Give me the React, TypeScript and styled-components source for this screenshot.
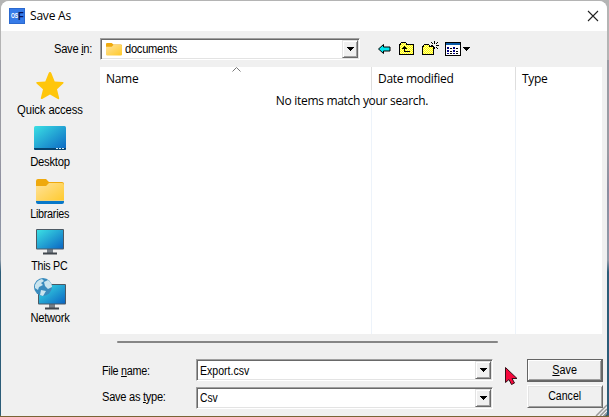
import React from 'react';
import styled, { createGlobalStyle } from 'styled-components';

const Global = createGlobalStyle`
  *{box-sizing:border-box}
  body{margin:0;background:#285b78;overflow:hidden}
  svg{display:block;flex:none}
`;

const Screen = styled.div`
  width:609px;height:417px;padding:1px 2px 1px 1px;overflow:hidden;
  background:linear-gradient(#b4b4b4 0 60px,#9a9ba3 60px 150px,#8b8da0 190px,#8f9aa8 260px,#2b5c78 272px 415px,#7a6335 416px);
`;
const Dialog = styled.div`
  height:415px;background:#f0f0f0;border-radius:8px 8px 0 0;overflow:hidden;position:relative;
  font-family:"Liberation Sans",Arial,sans-serif;font-size:12px;color:#000;
`;
const TitleBar = styled.header`
  height:30px;background:#fff;display:flex;align-items:center;padding:0 8px 0 8px;
`;
const Title = styled.h1`
  margin:0 auto 0 5px;font:12px/16px "Open Sans","Noto Sans",sans-serif;letter-spacing:-.2px;
`;
const Text = styled.span<{ $narrow: number; $ls?: number; $center?: boolean }>`
  display:inline-block;white-space:pre;line-height:14px;letter-spacing:${p => p.$ls ?? -0.3}px;
  transform:scaleX(${p => p.$narrow});transform-origin:${p => (p.$center ? 'center' : 'left')};
  u{text-underline-offset:1px;text-decoration-thickness:1px}
`;
const LookIn = styled.div`
  height:36px;display:flex;align-items:flex-start;padding:7px 0 0 53px;
`;
const LookLabel = styled.label`width:46px;padding-top:4px;display:flex`;
const Combo = styled.div<{ $w: number }>`
  width:${p => p.$w}px;height:22px;display:flex;align-items:center;background:#fff;padding:0 1px 0 1px;
  border:1px solid;border-color:#a0a0a0 #fff #fff #a0a0a0;
  box-shadow:inset 1px 1px #696969,inset -1px -1px #e3e3e3;
`;
const Value = styled.div<{ $inset?: number; $top?: number }>`
  flex:1;display:flex;align-items:center;gap:3px;padding:${p => p.$top ?? 0}px 0 0 ${p => p.$inset ?? 1.5}px;
`;
const Drop = styled.button`
  width:16px;height:18px;padding:0;border:1px solid;border-color:#e3e3e3 #696969 #696969 #e3e3e3;
  box-shadow:inset 1px 1px #fff,inset -1px -1px #a0a0a0;background:#f0f0f0;display:grid;place-items:center;
`;
const Tools = styled.div`
  display:flex;padding:3px 0 0 17px;gap:7px;
  svg:first-child{margin-right:-1px}
  svg:last-child{margin-left:-1px}
`;
const Middle = styled.div`display:flex;height:267px`;
const Places = styled.nav`width:99px;padding:3px 2px 0 0`;
const Place = styled.div`
  height:52px;display:flex;flex-direction:column;align-items:center;gap:1px;
`;
const List = styled.section`
  width:502px;background:#fff;display:grid;grid-template-columns:272px 144px 1fr;position:relative;
`;
const Column = styled.div`
  padding:4px 6px;border-right:1px solid;border-image:linear-gradient(#dedede 24px,#edf3fa 24px) 1;
  border-width:0 1px 0 0;font:12px/16px "Open Sans","Noto Sans",sans-serif;letter-spacing:-.3px;
  &:last-of-type{border:0}
`;
const Sort = styled.svg`position:absolute;left:132px;top:0`;
const Empty = styled.p`
  position:absolute;top:26px;left:0;width:504px;margin:0;text-align:center;
  font:12px/16px "Open Sans","Noto Sans",sans-serif;letter-spacing:-.3px;
`;
const Scroll = styled.div`width:381px;height:2px;margin:7px 0 0 116px;background:#868686;border-radius:1px`;
const Form = styled.div`display:flex;padding:16px 0 0 101px`;
const Fields = styled.div`
  display:grid;grid-template-columns:94px 297px;row-gap:6px;align-content:start;margin-right:34px;
`;
const Actions = styled.div`display:flex;flex-direction:column;gap:3px`;
const FieldLabel = styled.label<{ $top: number }>`padding-top:${p => p.$top}px;display:flex`;
const Button = styled.button<{ $primary?: boolean }>`
  width:76px;height:23px;padding:0 1px 1px 0;background:#f0f0f0;color:#000;
  font:12px/14px "Liberation Sans",Arial,sans-serif;border:1px solid;
  border-color:${p => (p.$primary ? '#646464' : '#fff #696969 #696969 #fff')};
  box-shadow:${p => (p.$primary ? 'inset -1px -1px #696969,inset 1px 1px #fff,inset -2px -2px #a0a0a0' : 'inset 1px 1px #e3e3e3,inset -1px -1px #a0a0a0')};
`;
const Pointer = styled.svg`position:absolute;left:503px;top:365px`;
const Grip = styled.svg`position:absolute;right:0;bottom:0`;

const Arrow = () => <svg width="7" height="4" shapeRendering="crispEdges"><path d="M0 0h7v1H6v1H5v1H4v1H3V3H2V2H1V1H0z" /></svg>;

const Folder = ({ w = 16, h = 13, blue = false }) => (
  <svg width={w} height={h} viewBox="0 0 28 25" preserveAspectRatio="none">
    <defs><linearGradient id="fold" x2="1" y2="1"><stop stopColor="#ffe29a" /><stop offset="1" stopColor="#ffc928" /></linearGradient></defs>
    <path d="M0 2q0-2 2-2h8l3 3h13q2 0 2 2v8H0z" fill="#efa90d" />
    <path d="M0 7h10l3-3h13q2 0 2 2v16q0 2-2 2H2q-2 0-2-2z" fill="url(#fold)" />
    {blue && <><path d="M0 21h28v1H0z" fill="#f2d27a" /><path d="M0 22h28v1q0 2-2 2H2q-2 0-2-2z" fill="#0878c9" /></>}
  </svg>
);

const Blues = () => <defs><linearGradient id="sea" x2="1" y2="1"><stop stopColor="#3be0e4" /><stop offset="1" stopColor="#0b66c3" /></linearGradient></defs>;

const Star = () => <svg width="32" height="32"><path d="M16 2q1 0 1.500 1.400l3.200 8 8 .6q1.800.2.5 1.600l-6.200 5.700 2.200 8.800q.2 1.600-1.400.8L16 24.600l-7.800 4.300q-1.500.7-1.400-.9L9 19.300l-6.400-5.700q-1.200-1.300.5-1.600l8.200-.6 3.200-8Q15 2 16 2z" fill="#ffc60b" /></svg>;
const DesktopIcon = () => <svg width="32" height="32"><Blues /><rect y="4" width="32" height="24" rx="1.500" fill="url(#sea)" /><path d="M0 26h32v.5q0 1.500-1.500 1.500h-29Q0 28 0 26.500z" fill="#07446f" /><path d="M22 26h2v1h-2zm3 0h2v1h-2zm3 0h2v1h-2z" fill="#d7eff9" /></svg>;
const Library = () => <svg width="32" height="32"><g transform="translate(2 5)"><Folder w={28} h={25} blue /></g></svg>;
const Monitor = () => <g><path d="M13 22h6v5h-6z" fill="#777f87" /><path d="M9 26.500h14v2H9z" fill="#40464d" /><rect x="2" y="3" width="28" height="20.500" rx="1" fill="#4c5964" /><rect x="3" y="4" width="26" height="18.500" fill="url(#sea)" /></g>;
const PC = () => <svg width="32" height="32"><Monitor /></svg>;
const Network = () => (
  <svg width="32" height="32">
    <g transform="translate(2 3)"><Monitor /></g>
    <circle cx="9" cy="9" r="9" fill="#398bbd" />
    <path d="M1 7q2-5 7-6l2 2-3 2 2 2-4 2-1 3-3-2zm9-3l4-2q4 3 4 7l-4 2-3-3zM7 12l5 1-3 5-3-1z" fill="#c9e4ee" />
  </svg>
);

const BackIcon = () => <svg width="16" height="16"><path d="M1.500 8l5-4.500V6h6.500v4h-6.500v2.500z" fill="#00e5ee" stroke="#000" /></svg>;
const Yellow = () => <defs><pattern id="dots" width="2" height="2" patternUnits="userSpaceOnUse"><path d="M0 0h2v2H0z" fill="#ff0" /><path d="M0 0h1v1H0zm1 1h1v1H1z" fill="#fff9a0" /></pattern></defs>;
const UpIcon = () => <svg width="16" height="16" shapeRendering="crispEdges"><Yellow /><path d="M.5 13.500v-10h1v-1l1-1h4l1 1v1h7v10z" fill="url(#dots)" stroke="#000" /><path d="M5 5h1v1h1v1h1v1H6v2h5v1H5V8H3V7h1V6h1z" /></svg>;
const NewIcon = () => <svg width="17" height="16" shapeRendering="crispEdges"><path d="M.5 13.500v-8h1v-1l1-1h4l1 1v1h4v8z" fill="url(#dots)" stroke="#000" /><path d="M12 0h1v3h-1zM9 1h1v1H9zm1 1h1v1h-1zm5-1h1v1h-1zm-1 1h1v1h-1zm-5 2h2v1H9zm5 0h3v1h-3zm-3 1h1v1h-1zm1 1h1v2h-1zm2 0h1v1h-1zm1 1h1v1h-1z" /></svg>;
const ViewIcon = () => (
  <svg width="26" height="16" shapeRendering="crispEdges">
    <path d="M.5 1.500h15v13H.5z" fill="#fff" stroke="#000" />
    <path d="M1 2h14v2H1z" fill="#0a5aa8" />
    <path d="M2 6h2v2H2zm6 0h2v2H8zM2 9h2v2H2zm6 0h2v2H8zM2 12h2v1H2zm6 0h2v1H8z" fill="#000080" />
    <path d="M5 7h2v1H5zm6 0h2v1h-2zM5 10h2v1H5zm6 0h2v1h-2zM5 12h2v1H5zm6 0h2v1h-2z" />
    <path d="M18 6h7v1h-1v1h-1v1h-1v1h-1V9h-1V8h-1V7h-1z" />
  </svg>
);

const Logo = styled.div`
  width:16px;height:16px;background:#367be8;border:1px solid #2b69cf;color:#fff;display:flex;align-items:center;
  padding-left:1px;font:bold 8px/14px "Liberation Sans",sans-serif;
  span{width:7px;transform:scaleX(.62);transform-origin:left}
  b{color:#071458;font-size:11px;transform:scaleX(.85);transform-origin:left}
`;

const places = [
  { name: 'Quick access', icon: <Star />, ls: -0.12, narrow: 0.94 },
  { name: 'Desktop', icon: <DesktopIcon />, narrow: 0.94 },
  { name: 'Libraries', icon: <Library />, narrow: 0.9 },
  { name: 'This PC', icon: <PC />, narrow: 0.89 },
  { name: 'Network', icon: <Network />, narrow: 0.93 },
];

export default function App() {
  return (
    <Screen>
      <Global />
      <Dialog>
        <TitleBar>
          <Logo><span>OS</span><b>F</b></Logo>
          <Title>Save As</Title>
          <svg width="12" height="12"><path d="M1 1l10 10M11 1L1 11" stroke="#222" strokeWidth="1.100" /></svg>
        </TitleBar>
        <LookIn>
          <LookLabel><Text $narrow={0.93}>Save <u>i</u>n:</Text></LookLabel>
          <Combo $w={260}><Value $inset={4}><Folder w={16} /><Text $narrow={0.93}>documents</Text></Value><Drop><Arrow /></Drop></Combo>
          <Tools><BackIcon /><UpIcon /><NewIcon /><ViewIcon /></Tools>
        </LookIn>
        <Middle>
          <Places>
            {places.map(p => (
              <Place key={p.name}>{p.icon}<Text $center $ls={p.ls} $narrow={p.narrow}>{p.name}</Text></Place>
            ))}
          </Places>
          <List>
            <Column>Name</Column><Column>Date modified</Column><Column>Type</Column>
            <Sort width="9" height="5"><path d="M.5 4.500l4-4 4 4" fill="none" stroke="#777" /></Sort>
            <Empty>No items match your search.</Empty>
          </List>
        </Middle>
        <Scroll />
        <Form>
          <Fields>
            <FieldLabel $top={5}><Text $narrow={0.9}>File <u>n</u>ame:</Text></FieldLabel>
            <Combo $w={297}><Value $top={2}><Text $ls={0} $narrow={0.88}>Export.csv</Text></Value><Drop><Arrow /></Drop></Combo>
            <FieldLabel $top={3}><Text $narrow={0.925}>Save as <u>t</u>ype:</Text></FieldLabel>
            <Combo $w={297}><Value><Text $ls={0} $narrow={0.86}>Csv</Text></Value><Drop><Arrow /></Drop></Combo>
          </Fields>
          <Actions>
            <Button $primary><Text $center $ls={0} $narrow={0.9}><u>S</u>ave</Text></Button>
            <Button><Text $center $ls={0} $narrow={0.88}>Cancel</Text></Button>
          </Actions>
        </Form>
        <Pointer width="15" height="20"><path d="M1.500 1.500v15l3.500-3 2.500 5 3-1.500-2.500-4.500h5z" fill="#f5083c" stroke="#351018" /></Pointer>
        <Grip width="12" height="12"><path d="M8 12l4-4v4z" fill="#2b5c78" /><path d="M1 12L12 1M5 12l7-7M9 12l3-3" stroke="#999" strokeWidth="1.500" /></Grip>
      </Dialog>
    </Screen>
  );
}
